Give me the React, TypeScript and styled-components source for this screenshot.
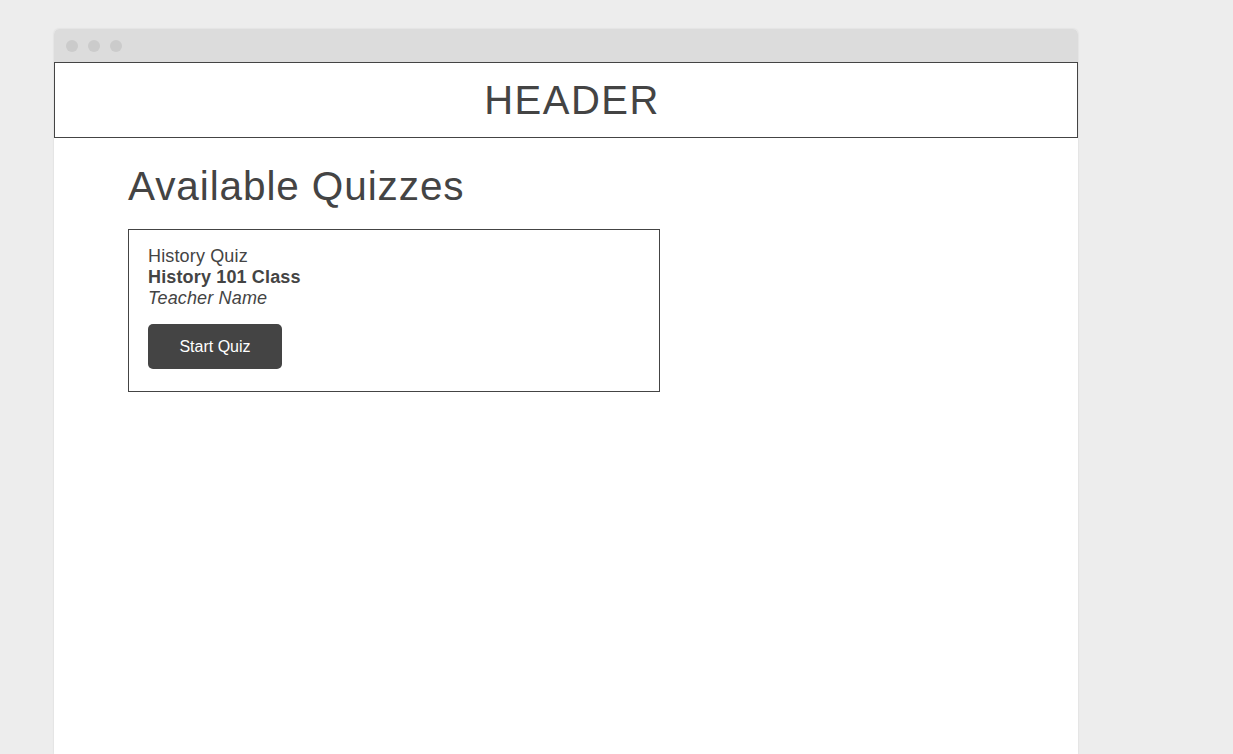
import styled, { createGlobalStyle } from 'styled-components';

const GlobalStyle = createGlobalStyle`
  html, body {
    margin: 0;
    padding: 0;
    background: #ededed;
    font-family: "Liberation Sans", Arial, sans-serif;
    color: #444;
  }
`;

const Page = styled.div`
  padding: 29px 0 0 54px;
  height: 754px;
  box-sizing: border-box;
  overflow: hidden;
`;

const Window = styled.div`
  width: 1024px;
  height: 725px;
  display: flex;
  flex-direction: column;
  background: #fff;
  border-radius: 5px 5px 0 0;
  box-shadow: 0 0 2px rgba(0, 0, 0, 0.12);
`;

const TitleBar = styled.div`
  height: 33px;
  background: #dcdcdc;
  border-radius: 5px 5px 0 0;
  display: flex;
  align-items: center;
  gap: 10px;
  padding-left: 12px;
`;

const Dot = styled.span`
  width: 12px;
  height: 12px;
  border-radius: 50%;
  background: #cbcbcb;
`;

const Header = styled.header`
  height: 74px;
  border: 1px solid #444;
  display: flex;
  align-items: center;
  justify-content: center;
  padding-left: 12px;
  font-size: 40px;
  letter-spacing: 1.5px;
  color: #444;
`;

const Main = styled.main`
  padding: 24px 74px;
`;

const Title = styled.h1`
  margin: 0 0 19px;
  font-size: 40.5px;
  letter-spacing: 0.9px;
  font-weight: normal;
  line-height: 48px;
  color: #444;
`;

const Card = styled.div`
  width: 491px;
  border: 1px solid #444;
  padding: 16px 20px 22px 19px;
  display: flex;
  flex-direction: column;
  align-items: flex-start;
`;

const Line = styled.div<{ $weight?: string; $italic?: boolean }>`
  font-size: 18px;
  line-height: 21px;
  letter-spacing: 0.15px;
  font-weight: ${(p) => p.$weight || 'normal'};
  font-style: ${(p) => (p.$italic ? 'italic' : 'normal')};
`;

const Button = styled.button`
  margin-top: 15px;
  width: 134px;
  height: 45px;
  border: none;
  border-radius: 5px;
  background: #444;
  color: #fff;
  font-family: "Liberation Sans", Arial, sans-serif;
  font-size: 16px;
  cursor: pointer;
`;

const App = (): JSX.Element => {
  return (
    <>
      <GlobalStyle />
      <Page>
        <Window>
          <TitleBar>
            <Dot />
            <Dot />
            <Dot />
          </TitleBar>
          <Header>HEADER</Header>
          <Main>
            <Title>Available Quizzes</Title>
            <Card>
              <Line>History Quiz</Line>
              <Line $weight="bold">History 101 Class</Line>
              <Line $italic>Teacher Name</Line>
              <Button>Start Quiz</Button>
            </Card>
          </Main>
        </Window>
      </Page>
    </>
  );
};

export default App;
